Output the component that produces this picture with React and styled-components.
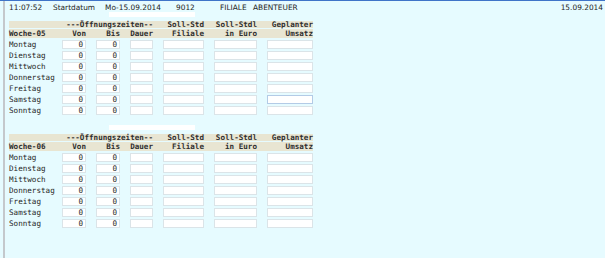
import React from "react";
import styled, { createGlobalStyle } from "styled-components";

const days = ["Montag", "Dienstag", "Mittwoch", "Donnerstag", "Freitag", "Samstag", "Sonntag"];

const weeks = [
  { name: "Woche-05", focusRow: 5 },
  { name: "Woche-06", focusRow: -1 },
];

const App = () => {
  return (
    <>
      <GlobalStyle />
      <Screen>
        <Frame>
          <TopBar>
            <Seg $w={44}>11:07:52</Seg>
            <Seg $w={52}>Startdatum</Seg>
            <Seg $w={71}>Mo-15.09.2014</Seg>
            <Seg $w={44}>9012</Seg>
            <Seg $w={33}>FILIALE</Seg>
            <Seg $grow>ABENTEUER</Seg>
            <DateText>15.09.2014</DateText>
          </TopBar>

          {weeks.map((week, wi) => (
            <Section key={week.name} $first={wi === 0}>
              <BlankField />
              <HeadRow $h={7}>
                <span />
                <HeadCell $span={3}>---Öffnungszeiten--</HeadCell>
                <HeadCell>Soll-Std</HeadCell>
                <HeadCell>Soll-Stdl</HeadCell>
                <HeadCell>Geplanter</HeadCell>
              </HeadRow>
              <HeadRow $h={9}>
                <HeadCell $left>{week.name}</HeadCell>
                <HeadCell>Von</HeadCell>
                <HeadCell>Bis</HeadCell>
                <HeadCell>Dauer</HeadCell>
                <HeadCell>Filiale</HeadCell>
                <HeadCell>in Euro</HeadCell>
                <HeadCell>Umsatz</HeadCell>
              </HeadRow>
              {days.map((day, di) => (
                <DataRow key={day}>
                  <DayLabel>{day}</DayLabel>
                  <Field>0</Field>
                  <Field>0</Field>
                  <Field />
                  <Field />
                  <Field />
                  <Field $focus={week.focusRow === di} />
                </DataRow>
              ))}
            </Section>
          ))}
        </Frame>
      </Screen>
    </>
  );
};

export default App;

const GlobalStyle = createGlobalStyle`
  body {
    margin: 0;
    background: #e6fbff;
  }
`;

const Screen = styled.div`
  width: 605px;
  height: 258px;
  box-sizing: border-box;
  background: #e6fbff;
  border-top: 1px solid #3f74c8;
  padding-left: 3px;
  display: flex;
  overflow: hidden;
`;

const Frame = styled.div`
  flex: 1;
  display: flex;
  flex-direction: column;
  border-left: 2px solid #c4c8cc;
  padding-left: 4px;
`;

const TopBar = styled.div`
  display: flex;
  height: 11px;
  box-sizing: border-box;
  padding-top: 3px;
  line-height: 8px;
  font-family: "DejaVu Sans", sans-serif;
  font-size: 7.4px;
  color: #1e1e1e;
  white-space: nowrap;
`;

const Seg = styled.span`
  width: ${(p) => (p.$w ? `${p.$w}px` : "auto")};
  flex: ${(p) => (p.$grow ? 1 : "none")};
`;

const DateText = styled.span`
  margin-right: 2px;
`;

const Section = styled.div`
  margin-top: ${(p) => (p.$first ? "0" : "9px")};
  display: flex;
  flex-direction: column;
  width: 304px;
  font-family: "DejaVu Sans Mono", monospace;
  font-size: 7.6px;
`;

const BlankField = styled.div`
  margin-left: 100px;
  width: 86px;
  height: 5px;
  background: #ffffff;
  margin-bottom: 4px;
`;

const Grid = styled.div`
  display: grid;
  grid-template-columns: 43px 24px 24px 23px 41px 43px 46px;
  column-gap: 10px;
`;

const HeadRow = styled(Grid)`
  height: ${(p) => p.$h}px;
  line-height: ${(p) => p.$h}px;
  margin-bottom: 1px;
  background: #e8e5d2;
  color: #2e2e2e;
  font-weight: bold;
`;

const HeadCell = styled.span`
  grid-column: span ${(p) => p.$span || 1};
  text-align: ${(p) => (p.$left ? "left" : "right")};
  white-space: nowrap;
`;

const DataRow = styled(Grid)`
  height: 11px;
  align-items: center;
`;

const DayLabel = styled.span`
  color: #262626;
  white-space: nowrap;
  line-height: 11px;
`;

const Field = styled.div`
  height: 9px;
  box-sizing: border-box;
  background: #ffffff;
  border: 1px solid ${(p) => (p.$focus ? "#b3cbe6" : "#dbe4e8")};
  text-align: right;
  padding-right: 2px;
  line-height: 7px;
  color: #262626;
`;
